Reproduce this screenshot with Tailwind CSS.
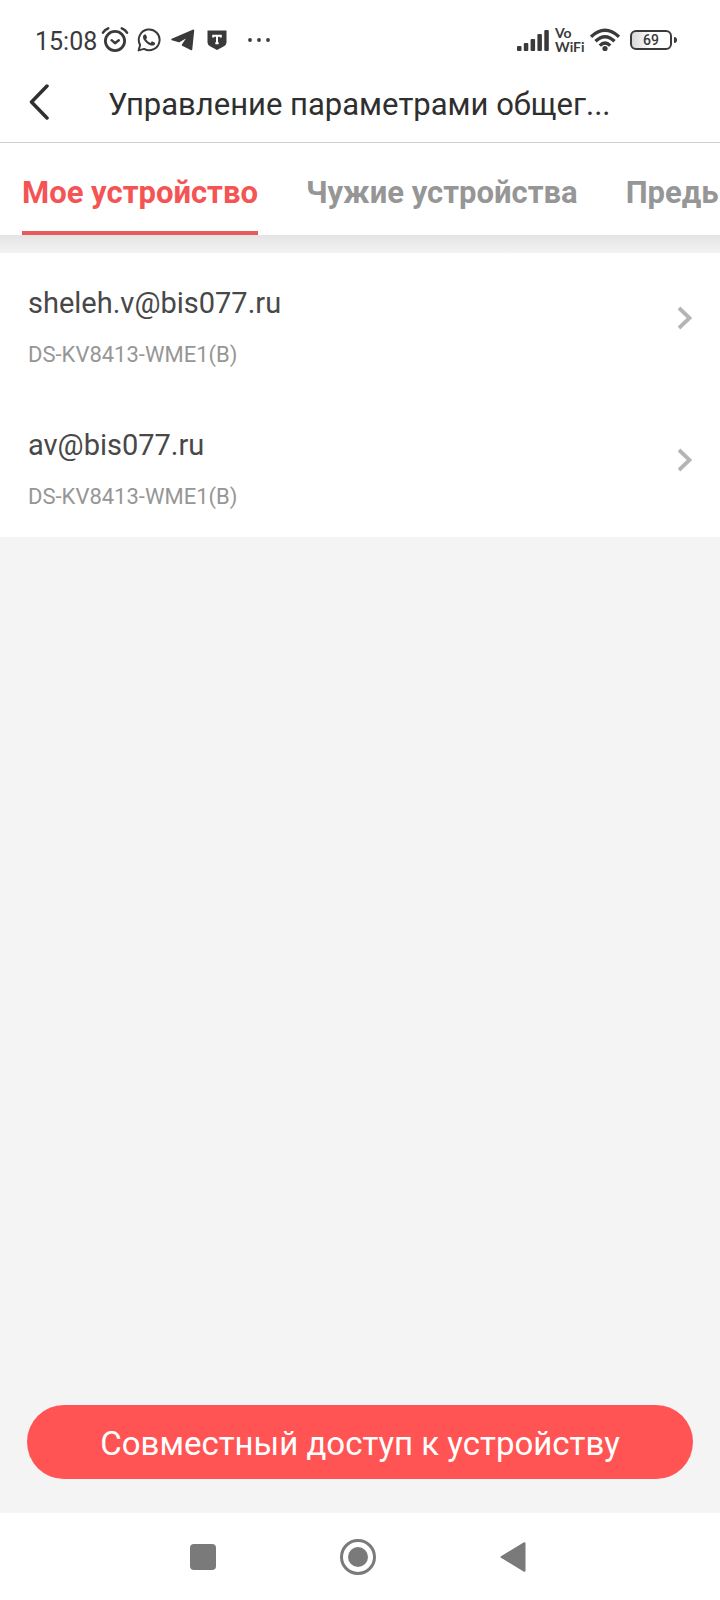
<!DOCTYPE html>
<html lang="ru">
<head>
    <meta charset="UTF-8">
    <meta name="viewport" content="width=device-width, initial-scale=1.0">
    <title>Управление параметрами общего доступа</title>
    <script src="https://cdn.jsdelivr.net/npm/@tailwindcss/browser@4"></script>
</head>
<body class="flex flex-col min-h-screen bg-[#f4f4f4] font-[Roboto,sans-serif] overflow-x-hidden">

    <!-- Status bar -->
    <div class="flex items-center justify-between h-16 pt-4 pl-[35px] pr-[43px] bg-white text-[#3a3a3a]">
        <div class="flex items-center">
            <span class="pt-1 text-[25px] leading-8">15:08</span>
            <svg class="w-[28px] h-[28px] ml-1" viewBox="0 0 28 28" fill="none" stroke="currentColor" stroke-linecap="round" stroke-linejoin="round">
                <circle cx="14" cy="15" r="9.6" stroke-width="2.8"/>
                <path d="M10.6 14.2l3.4 3 3.8-3" stroke-width="2.4"/>
                <path d="M2 6.6Q4 3.6 7.2 2.4M26 6.6Q24 3.6 20.8 2.4" stroke-width="2.6"/>
            </svg>
            <svg class="w-[24px] h-[24px] ml-2" viewBox="0 0 24 24" fill="currentColor">
                <path d="M17.472 14.382c-.297-.149-1.758-.867-2.03-.967-.273-.099-.471-.148-.67.15-.197.297-.767.966-.94 1.164-.173.199-.347.223-.644.075-.297-.15-1.255-.463-2.39-1.475-.883-.788-1.48-1.761-1.653-2.059-.173-.297-.018-.458.13-.606.134-.133.298-.347.446-.52.149-.174.198-.298.298-.497.099-.198.05-.371-.025-.52-.075-.149-.669-1.612-.916-2.207-.242-.579-.487-.5-.669-.51-.173-.008-.371-.01-.57-.01-.198 0-.52.074-.792.372-.272.297-1.04 1.016-1.04 2.479 0 1.462 1.065 2.875 1.213 3.074.149.198 2.096 3.2 5.077 4.487.709.306 1.262.489 1.694.625.712.227 1.36.195 1.871.118.571-.085 1.758-.719 2.006-1.413.248-.694.248-1.289.173-1.413-.074-.124-.272-.198-.57-.347"/>
                <path d="M1.600 22.400l1.500-5.500A10.400 10.400 0 1 1 7.100 20.900z" fill="none" stroke="currentColor" stroke-width="2" stroke-linejoin="round"/>
            </svg>
            <svg class="w-[24px] h-[22px] ml-[10px]" viewBox="0 0 24 22" fill="currentColor">
                <path d="M1 10.500L22.500 1.200L20.500 20.500L11.500 16L17.500 7L8 12.500z" stroke="currentColor" stroke-width="1.500" stroke-linejoin="round"/>
            </svg>
            <svg class="w-[20px] h-[20px] ml-3" viewBox="0 0 20 20">
                <path d="M.5 .5h19v12Q19.500 15 16.500 16.500L10 20L3.500 16.500Q.5 15 .5 12.500z" fill="currentColor"/>
                <path d="M6.200 7.500V5.800h7.600v1.700M10 5.800v7.200M8.300 13.200h3.400" fill="none" stroke="#fff" stroke-width="2"/>
            </svg>
            <svg class="w-[24px] h-[6px] ml-5" viewBox="0 0 24 6" fill="currentColor">
                <circle cx="3" cy="3" r="1.900"/>
                <circle cx="12" cy="3" r="1.900"/>
                <circle cx="21" cy="3" r="1.900"/>
            </svg>
        </div>
        <div class="flex items-center">
            <svg class="w-[32px] h-[22px]" viewBox="0 0 32 22" fill="currentColor">
                <rect x="0" y="17" width="4.500" height="5" rx="1"/>
                <rect x="6.800" y="14" width="4.500" height="8" rx="1"/>
                <rect x="13.600" y="10" width="4.500" height="12" rx="1"/>
                <rect x="20.400" y="5" width="4.500" height="17" rx="1"/>
                <rect x="27.300" y="1" width="4.500" height="21" rx="1"/>
            </svg>
            <div class="flex flex-col ml-[6px] w-[29px] font-[Lato,sans-serif] font-bold text-[14px] leading-[14px]">
                <span>Vo</span>
                <span>WiFi</span>
            </div>
            <svg class="w-[30px] h-[24px] ml-[6px]" viewBox="0 0 30 24" fill="none" stroke="currentColor" stroke-width="3.400">
                <path d="M1 8.800Q15-4.200 29 8.800"/>
                <path d="M5.500 13.300Q15 4.200 24.500 13.300"/>
                <path d="M9.800 17.600Q15 12.400 20.200 17.600"/>
                <circle cx="15" cy="20.500" r="2.600" fill="currentColor" stroke="none"/>
            </svg>
            <div class="flex items-center ml-[10px]">
                <div class="flex items-center justify-center w-[42px] h-[20px] rounded-md border-2 border-current bg-linear-to-r from-[#d8d8d8] to-white to-50% text-[14px] leading-4 font-medium">69</div>
                <span class="w-[3px] h-[6px] ml-[2px] rounded-r-sm bg-current"></span>
            </div>
        </div>
    </div>

    <!-- Title bar -->
    <header class="flex items-center h-[79px] px-7 border-b border-[#cfcfcf] bg-white text-[#2f2f2f]">
        <button type="button" aria-label="Назад" class="w-6 h-10">
            <svg class="w-[24px] h-[38px]" viewBox="0 0 24 38" fill="none" stroke="currentColor" stroke-width="3.500" stroke-linecap="round" stroke-linejoin="round">
                <path d="M19 2L3.500 18L19 34"/>
            </svg>
        </button>
        <h1 class="ml-14 pt-1 text-[31px] leading-10">Управление параметрами общег...</h1>
    </header>

    <!-- Tabs -->
    <nav class="flex gap-12 h-[92px] pl-[22px] bg-white text-[31px] font-bold leading-10 whitespace-nowrap overflow-hidden text-[#969696]">
        <a href="#" class="shrink-0 pt-[30px] border-b-4 border-[#e85a5a] text-[#f45454]">Мое устройство</a>
        <a href="#" class="shrink-0 pt-[30px]">Чужие устройства</a>
        <a href="#" class="shrink-0 pt-[30px]">Предыдущие</a>
    </nav>
    <div class="h-[18px] bg-linear-to-b from-[#e4e4e4] to-[#f3f3f3]"></div>

    <!-- Shared accounts -->
    <main class="grow">
        <ul class="bg-white">
            <li>
                <a href="#" class="flex justify-between h-[142px] px-7 pt-[30px]">
                    <div>
                        <p class="text-[29px] leading-10 text-[#484848]">sheleh.v@bis077.ru</p>
                        <p class="mt-[18px] text-[22px] leading-7 text-[#969696]">DS-KV8413-WME1(B)</p>
                    </div>
                    <svg class="w-[14px] h-[24px] mt-[23px]" viewBox="0 0 14 24" fill="none" stroke="#b5b5b5" stroke-width="3.800">
                        <path d="M1 2L11.500 12L1 22"/>
                    </svg>
                </a>
            </li>
            <li>
                <a href="#" class="flex justify-between h-[142px] px-7 pt-[30px]">
                    <div>
                        <p class="text-[29px] leading-10 text-[#484848]">av@bis077.ru</p>
                        <p class="mt-[18px] text-[22px] leading-7 text-[#969696]">DS-KV8413-WME1(B)</p>
                    </div>
                    <svg class="w-[14px] h-[24px] mt-[23px]" viewBox="0 0 14 24" fill="none" stroke="#b5b5b5" stroke-width="3.800">
                        <path d="M1 2L11.500 12L1 22"/>
                    </svg>
                </a>
            </li>
        </ul>
    </main>

    <div class="px-[27px] pb-[34px]">
        <button type="button" class="w-full h-[74px] pt-1 rounded-full bg-[#ff5453] text-white text-[33px] leading-10">Совместный доступ к устройству</button>
    </div>

    <!-- System navigation -->
    <footer class="flex items-center justify-center gap-[124px] h-[87px] pr-[5px] bg-white text-[#7a7a7a]">
        <button type="button" aria-label="Недавние" class="w-[26px] h-[26px] rounded-sm bg-current"></button>
        <button type="button" aria-label="Домой" class="flex items-center justify-center w-[36px] h-[36px] rounded-full border-3 border-current">
            <span class="w-5 h-5 rounded-full bg-current"></span>
        </button>
        <button type="button" aria-label="Назад">
            <svg class="w-[26px] h-[30px]" viewBox="0 0 26 30" fill="currentColor" stroke="currentColor" stroke-width="2" stroke-linejoin="round">
                <path d="M1.500 15L24.500 1.200V28.800z"/>
            </svg>
        </button>
    </footer>
</body>
</html>
